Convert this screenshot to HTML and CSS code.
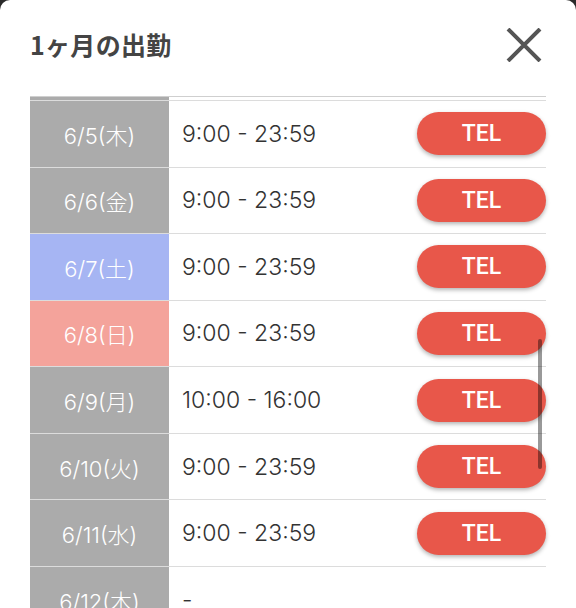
FILE: index.html
```html
<!DOCTYPE html>
<html lang="ja">
<head>
<meta charset="utf-8">
<link rel="stylesheet" href="styles.css">
</head>
<body>
<div class="dialog">
  <div class="header">
    <h1 class="title">1ヶ月の出勤</h1>
    <button class="close" aria-label="閉じる">
      <svg width="36" height="34" viewBox="0 0 36 34"><path d="M2 1 L34 33 M34 1 L2 33" stroke="#555" stroke-width="4" fill="none"/></svg>
    </button>
  </div>
  <div class="list">
    <div class="row partial"><div class="date"></div><div class="time"></div></div>
    <div class="row"><div class="date">6/5(木)</div><div class="time"><span>9:00 - 23:59</span><button class="tel">TEL</button></div></div>
    <div class="row"><div class="date">6/6(金)</div><div class="time"><span>9:00 - 23:59</span><button class="tel">TEL</button></div></div>
    <div class="row"><div class="date sat">6/7(土)</div><div class="time"><span>9:00 - 23:59</span><button class="tel">TEL</button></div></div>
    <div class="row"><div class="date sun">6/8(日)</div><div class="time"><span>9:00 - 23:59</span><button class="tel">TEL</button></div></div>
    <div class="row"><div class="date">6/9(月)</div><div class="time"><span>10:00 - 16:00</span><button class="tel">TEL</button></div></div>
    <div class="row"><div class="date">6/10(火)</div><div class="time"><span>9:00 - 23:59</span><button class="tel">TEL</button></div></div>
    <div class="row"><div class="date">6/11(水)</div><div class="time"><span>9:00 - 23:59</span><button class="tel">TEL</button></div></div>
    <div class="row"><div class="date">6/12(木)</div><div class="time"><span>-</span></div></div>
    <div class="scrollbar"></div>
  </div>
</div>
</body>
</html>
```
FILE: styles.css
```css
* { box-sizing: border-box; }
html, body { margin: 0; padding: 0; }
body {
  background: #2a2a2a;
  font-family: Inter, "Noto Sans CJK JP", sans-serif;
}
.dialog {
  background: #fff;
  height: 608px;
  border-radius: 10px 10px 0 0;
  padding: 0 30px;
  overflow: hidden;
}
.header {
  height: 88px;
  display: flex;
  align-items: center;
  justify-content: space-between;
}
.title {
  margin: 0;
  font-family: "Noto Sans CJK JP", sans-serif;
  font-size: 25px;
  font-weight: 700;
  color: #444;
  letter-spacing: 0.3px;
}
.close {
  border: 0;
  background: none;
  padding: 0;
  margin-right: 4px;
  margin-top: 2px;
  width: 36px;
  height: 34px;
  display: block;
}
.close svg { display: block; }
.list {
  position: relative;
  margin-top: 8px;
  border-top: 1px solid #cfcfcf;
}
.row {
  display: flex;
  height: 66.57px;
  border-bottom: 1px solid #dcdcdc;
}
.row.partial { height: 4px; }
.date {
  width: 139px;
  flex: none;
  background: #ababab;
  color: #fff;
  font-size: 22px;
  font-weight: 300;
  display: flex;
  align-items: center;
  justify-content: center;
}
.date.sat { background: #a6b5f3; }
.date.sun { background: #f4a39b; }
.time {
  flex: 1;
  display: flex;
  align-items: center;
  justify-content: space-between;
  padding-left: 13px;
  font-size: 23px;
  font-weight: 300;
  color: #333;
}
.tel {
  width: 129px;
  height: 43px;
  border: 0;
  border-radius: 22px;
  background: #e8574a;
  color: #fff;
  font-family: Roboto, "Liberation Sans", sans-serif;
  font-weight: 500;
  font-size: 23px;
  box-shadow: 0 2px 4px rgba(0,0,0,0.3);
  padding: 0;
}
.scrollbar {
  position: absolute;
  right: 4px;
  top: 242px;
  width: 4px;
  height: 130px;
  border-radius: 2px;
  background: rgba(0,0,0,0.4);
}
```
